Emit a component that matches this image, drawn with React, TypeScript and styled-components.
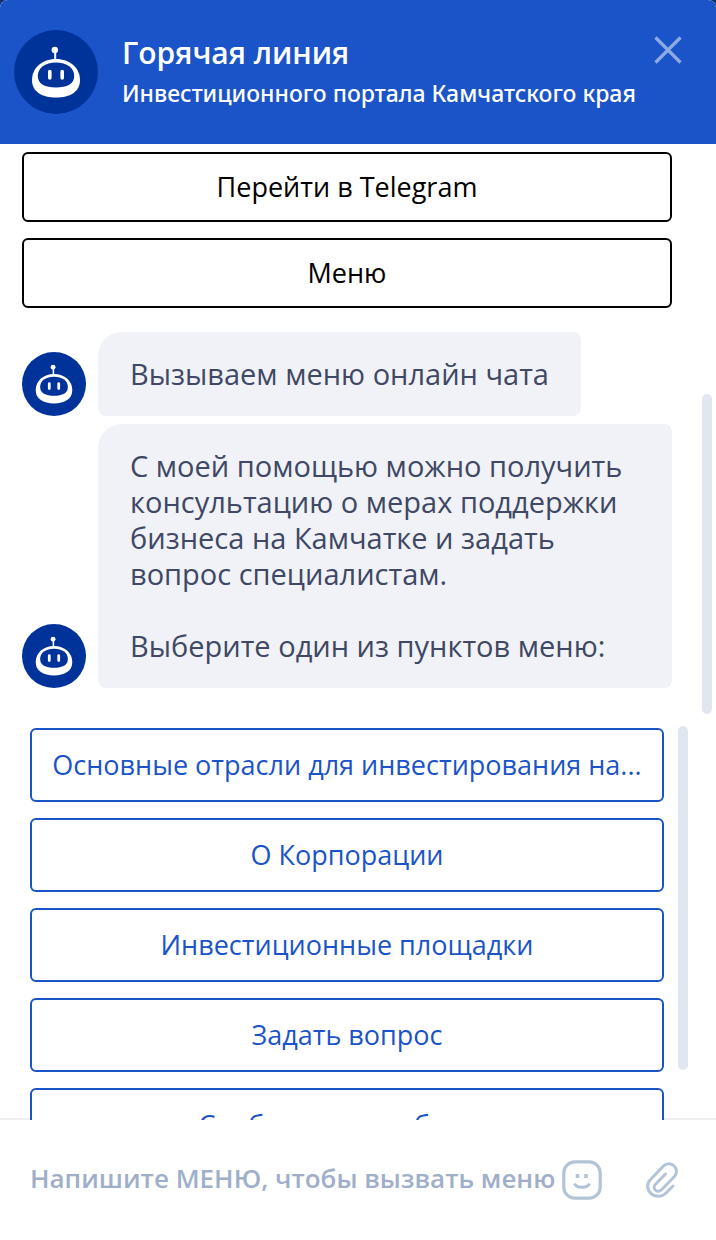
import React from "react";
import styled, { createGlobalStyle } from "styled-components";

const colors = {
  brand: "#1b54c8",
  avatar: "#003399",
  backdrop: "#14306f",
  bubble: "#f0f2f7",
  bubbleText: "#3f4864",
  thumb: "#e1e6f0",
  muted: "#9fafc9",
  icon: "#b3c3d8",
};

const GlobalStyle = createGlobalStyle`
  *, *::before, *::after { box-sizing: border-box; }
  body {
    margin: 0;
    background: ${colors.backdrop};
    font-family: "Open Sans", "Noto Sans", sans-serif;
  }
  button, input { font-family: inherit; }
`;

const Widget = styled.main`
  display: flex;
  flex-direction: column;
  height: 100vh;
  background: #fff;
  border-radius: 8px 8px 0 0;
  overflow: hidden;
`;

const Header = styled.header`
  display: flex;
  align-items: flex-start;
  padding: 30px 34px 30px 14px;
  background: ${colors.brand};
  color: #fff;
`;

const Heading = styled.div`
  flex: 1;
  min-width: 0;
  display: flex;
  flex-direction: column;
  padding-top: 3px;
  margin-left: 24px;
  white-space: nowrap;
`;

const Title = styled.h1`
  margin: 0;
  font-size: 30px;
  line-height: 40px;
  font-weight: 600;
`;

const Subtitle = styled.p`
  margin: 0;
  font-family: "Noto Sans", "Open Sans", sans-serif;
  font-size: 23px;
  line-height: 40px;
  font-weight: 500;
`;

const IconButton = styled.button<{ $tone: string }>`
  display: flex;
  flex: none;
  padding: 0;
  border: 0;
  background: none;
  color: ${(p) => p.$tone};
  cursor: pointer;
`;

const CloseButton = styled(IconButton)`
  margin-top: 6px;
`;

const AvatarDisc = styled.svg<{ $size: number }>`
  display: block;
  flex: none;
  width: ${(p) => p.$size}px;
  height: ${(p) => p.$size}px;
`;

const Body = styled.section`
  position: relative;
  z-index: 1;
  flex: 1;
  min-height: 0;
  display: flex;
  margin-bottom: -2px;
  padding: 8px 4px 0 22px;
  overflow: hidden;
`;

const Messages = styled.div`
  flex: 1;
  min-width: 0;
`;

const ScrollThumb = styled.div<{ $length: number }>`
  flex: none;
  width: 10px;
  height: ${(p) => p.$length}px;
  border-radius: 5px;
  background: ${colors.thumb};
`;

const PageScroll = styled.div`
  flex: none;
  padding-top: 242px;
`;

const MenuScroll = styled.div`
  flex: none;
  margin: -2px 0 0 14px;
`;

const Actions = styled.div`
  display: flex;
  flex-direction: column;
  gap: 16px;
  margin-right: 30px;
`;

const ActionButton = styled.button<{ $tone: string; $height: number }>`
  flex: none;
  width: 100%;
  height: ${(p) => p.$height}px;
  padding: 0 16px;
  border: 2px solid ${(p) => p.$tone};
  border-radius: 6px;
  background: #fff;
  color: ${(p) => p.$tone};
  font-size: 27px;
  line-height: 36px;
  white-space: nowrap;
  overflow: hidden;
  text-overflow: ellipsis;
  cursor: pointer;
`;

const Thread = styled.div`
  display: flex;
  flex-direction: column;
  gap: 8px;
  margin: 24px 30px 0 0;
`;

const MessageRow = styled.div`
  display: flex;
  align-items: flex-end;
  gap: 12px;
`;

const Bubble = styled.div`
  padding: 24px 32px;
  border-radius: 24px 8px 8px 8px;
  background: ${colors.bubble};
  color: ${colors.bubbleText};
  font-size: 29px;
  line-height: 36px;
  white-space: pre-line;
`;

const Menu = styled.div`
  display: flex;
  margin: 40px 14px 0 8px;
`;

const MenuList = styled.div`
  flex: 1;
  min-width: 0;
  display: flex;
  flex-direction: column;
  gap: 16px;
`;

const Footer = styled.form`
  flex: none;
  display: flex;
  align-items: flex-start;
  padding: 40px 38px 40px 30px;
  border-top: 2px solid #efefef;
  background: #fff;
`;

const MessageInput = styled.input`
  flex: 1;
  min-width: 0;
  height: 36px;
  padding: 0;
  border: 0;
  outline: 0;
  background: none;
  color: ${colors.bubbleText};
  font-size: 26px;
  font-weight: 600;
  &::placeholder {
    color: ${colors.muted};
    opacity: 1;
  }
`;

const AttachButton = styled(IconButton)`
  margin: 2px 0 0 44px;
`;

const BotAvatar = ({ size }: { size: number }) => (
  <AvatarDisc $size={size} viewBox="0 0 84 84" role="img" aria-label="Бот">
    <circle cx="42" cy="42" r="42" fill={colors.avatar} />
    <circle cx="40.800" cy="20" r="3.200" fill="#fff" />
    <path d="M41.200 21v10" stroke="#fff" strokeWidth="2" />
    <path
      d="M42 29C28 29 18 38 18 50C18 62 28 67.500 42 67.500C56 67.500 66 62 66 50C66 38 56 29 42 29Z"
      fill="#fff"
    />
    <path
      d="M42 32.500C31 32.500 23.800 38 23.800 46C23.800 54 31 57.500 42 57.500C53 57.500 60.200 54 60.200 46C60.200 38 53 32.500 42 32.500Z"
      fill={colors.avatar}
    />
    <path d="M35.800 41.500v6.500M48.200 41.500v6.500" stroke="#fff" strokeWidth="3.600" strokeLinecap="round" />
  </AvatarDisc>
);

const CloseIcon = () => (
  <svg width="28" height="28" viewBox="0 0 28 28" fill="none" aria-hidden="true">
    <path d="M1.500 1.500l25 25M26.500 1.500l-25 25" stroke="currentColor" strokeWidth="3.200" />
  </svg>
);

const SmileIcon = () => (
  <svg width="40" height="40" viewBox="0 0 40 40" fill="none" stroke="currentColor" aria-hidden="true">
    <rect x="1.800" y="1.800" width="36.400" height="36.400" rx="11" strokeWidth="3.200" />
    <path d="M12.500 23.500c1 3 4 3.800 7.500 3.800s6.500-.8 7.500-3.800" strokeWidth="3" />
    <path d="M15.500 14v4M24 14v4" strokeWidth="3.600" />
  </svg>
);

const ClipIcon = () => (
  <svg
    width="32"
    height="36"
    viewBox="0 0 32 36"
    fill="none"
    stroke="currentColor"
    strokeWidth="3"
    strokeLinecap="round"
    strokeLinejoin="round"
    aria-hidden="true"
  >
    <path d="M27 24l-7.200 7.200C16 35 10 35.500 5.500 32C0.500 28 .5 21.500 4.500 17.500L17 4.500C20 1.200 25 .8 28.200 4C31.300 7 31.200 11.500 28.200 14.700L15.500 27.700C13.500 29.700 10.800 29.500 9.300 28C7.800 26.500 7.800 24 9.500 22.300L19.500 12" />
  </svg>
);

const menuItems = [
  "Основные отрасли для инвестирования на...",
  "О Корпорации",
  "Инвестиционные площадки",
  "Задать вопрос",
  "Сообщить о проблеме",
];

const messages = [
  "Вызываем меню онлайн чата",
  "С моей помощью можно получить консультацию о мерах поддержки бизнеса на Камчатке и задать вопрос специалистам.\n\nВыберите один из пунктов меню:",
];

export default function App() {
  return (
    <>
      <GlobalStyle />
      <Widget>
        <Header>
          <BotAvatar size={84} />
          <Heading>
            <Title>Горячая линия</Title>
            <Subtitle>Инвестиционного портала Камчатского края</Subtitle>
          </Heading>
          <CloseButton type="button" aria-label="Закрыть" $tone="#8eaae4">
            <CloseIcon />
          </CloseButton>
        </Header>

        <Body>
          <Messages>
            <Actions>
              <ActionButton type="button" $tone="#000" $height={70}>
                Перейти в Telegram
              </ActionButton>
              <ActionButton type="button" $tone="#000" $height={70}>
                Меню
              </ActionButton>
            </Actions>
            <Thread>
              {messages.map((text) => (
                <MessageRow key={text}>
                  <BotAvatar size={64} />
                  <Bubble>{text}</Bubble>
                </MessageRow>
              ))}
            </Thread>
            <Menu>
              <MenuList>
                {menuItems.map((item) => (
                  <ActionButton key={item} type="button" $tone={colors.brand} $height={74}>
                    {item}
                  </ActionButton>
                ))}
              </MenuList>
              <MenuScroll>
                <ScrollThumb $length={344} />
              </MenuScroll>
            </Menu>
          </Messages>
          <PageScroll>
            <ScrollThumb $length={320} />
          </PageScroll>
        </Body>

        <Footer onSubmit={(e) => e.preventDefault()}>
          <MessageInput
            type="text"
            aria-label="Сообщение"
            placeholder="Напишите МЕНЮ, чтобы вызвать меню"
          />
          <IconButton type="button" aria-label="Смайлы" $tone={colors.icon}>
            <SmileIcon />
          </IconButton>
          <AttachButton type="button" aria-label="Прикрепить файл" $tone={colors.icon}>
            <ClipIcon />
          </AttachButton>
        </Footer>
      </Widget>
    </>
  );
}
